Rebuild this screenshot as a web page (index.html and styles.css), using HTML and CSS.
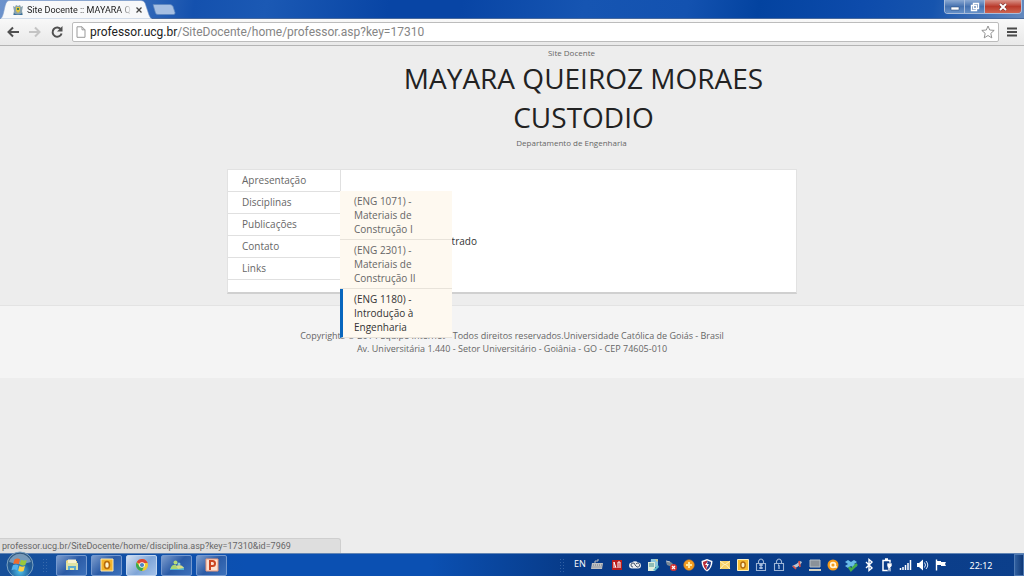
FILE: index.html
```html
<!DOCTYPE html>
<html lang="pt-BR">
<head>
<meta charset="utf-8">
<title>Site Docente :: MAYARA QUEIROZ MORAES CUSTODIO</title>
<link rel="stylesheet" href="styles.css">
</head>
<body>
<div class="tabstrip">
  <div class="tab">
    <svg class="tab-shape" viewBox="0 0 152 19" preserveAspectRatio="none"><path d="M0 19C4 18 4 5 7 1.500Q8 .5 10 .5H141Q144 .5 145 3L149 15Q150 18 152 19Z" fill="#f7f8fa" stroke="#7c9bc7" stroke-width=".6"/></svg>
    <svg class="favicon" viewBox="0 0 12 12"><path d="M1 2l2 1 1-2 2 1 2-1 1 2 2-1-1 5 1 4H1l1-4z" fill="#8aa2ae"/><path d="M4 3h4v4L6 9 4 7z" fill="#e0c546"/><path d="M2 9q4 3 8 0v2H2z" fill="#376f9f"/><path d="M5 4h2v2H5z" fill="#3c7e58"/></svg>
    <span class="tab-title">Site Docente :: MAYARA Q</span>
    <button class="tab-close" aria-label="Fechar guia"><svg viewBox="0 0 8 8"><path d="M1.500 1.500l5 5M6.500 1.500l-5 5" stroke="#444" stroke-width="1.300"/></svg></button>
  </div>
  <button class="new-tab" aria-label="Nova guia"><svg viewBox="0 0 24 11"><path d="M1 .5h17q2 0 3 2l2 6q.5 2-1.500 2H6Q4 10.500 3.500 9z" fill="#a6bfe2" stroke="#5f86bd" stroke-width=".7"/></svg></button>
  <div class="window-controls">
    <button class="win-min" aria-label="Minimizar"><svg viewBox="0 0 12 12"><path d="M2 6h8v3H2z" fill="#fff" stroke="#345583" stroke-width=".6"/></svg></button>
    <button class="win-max" aria-label="Restaurar"><svg viewBox="0 0 12 12"><path d="M4.500 2.500h5v5h-5zM2.500 4.500h5v5h-5z" fill="#5278ac" stroke="#fff" stroke-width="1.400"/></svg></button>
    <button class="win-close" aria-label="Fechar"><svg viewBox="0 0 12 12"><path d="M3 3l6 6M9 3l-6 6" stroke="#6b2a2a" stroke-width="3"/><path d="M3 3l6 6M9 3l-6 6" stroke="#fff" stroke-width="2"/></svg></button>
  </div>
</div>
<div class="toolbar">
  <button class="tool" aria-label="Voltar"><svg viewBox="0 0 14 14"><path d="M13 7H3M7 2.500L2.500 7 7 11.500" fill="none" stroke="#505050" stroke-width="2"/></svg></button>
  <button class="tool" aria-label="Avançar"><svg viewBox="0 0 14 14"><path d="M1 7h10M7 2.500L11.500 7 7 11.500" fill="none" stroke="#c4c4c4" stroke-width="2"/></svg></button>
  <button class="tool" aria-label="Recarregar"><svg viewBox="0 0 14 14"><path d="M11 4.500A4.600 4.600 0 1 0 11.600 8.500" fill="none" stroke="#505050" stroke-width="2"/><path d="M12.500 1v5.500H7z" fill="#505050"/></svg></button>
  <div class="omnibox">
    <svg class="page-icon" viewBox="0 0 10 12"><path d="M1 .8h5l3 3v7.500H1zM6 .8v3h3" fill="#fff" stroke="#999"/></svg>
    <label class="url"><span class="url-view" aria-hidden="true"><b>professor.ucg.br</b>/SiteDocente/home/professor.asp?key=17310</span><input type="text" aria-label="Endereço"></label>
    <button class="star" aria-label="Favoritos"><svg viewBox="0 0 14 14"><path d="M7 1l1.700 4 4.500.4-3.400 3 1 4.500L7 10.500l-3.800 2.400 1-4.500-3.400-3 4.500-.4z" fill="#fff" stroke="#888" stroke-width=".9"/></svg></button>
  </div>
  <button class="menu-button" aria-label="Menu"><svg viewBox="0 0 10 10"><path d="M0 1.500h10M0 5h10M0 8.500h10" stroke="#4a4a4a" stroke-width="2"/></svg></button>
</div>
<main class="page">
  <header class="masthead wrap">
    <div class="masthead-text">
      <p>Site Docente</p>
      <h1>MAYARA QUEIROZ MORAES CUSTODIO</h1>
      <p>Departamento de Engenharia</p>
    </div>
  </header>
  <div class="panel wrap">
    <nav class="side">
      <ul class="menu">
        <li><a href="#">Apresentação</a></li>
        <li><a href="#">Disciplinas</a>
          <ul class="submenu">
            <li><a href="#">(ENG 1071) - Materiais de Construção I</a></li>
            <li><a href="#">(ENG 2301) - Materiais de Construção II</a></li>
            <li class="active"><a href="#">(ENG 1180) - Introdução à Engenharia</a></li>
          </ul>
        </li>
        <li><a href="#">Publicações</a></li>
        <li><a href="#">Contato</a></li>
        <li><a href="#">Links</a></li>
      </ul>
    </nav>
    <section class="content"><p>Conteúdo não cadastrado</p></section>
  </div>
  <footer class="footer">
    <p>Copyrights © 2014 Equipe Internet - Todos direitos reservados.Universidade Católica de Goiás - Brasil</p>
    <p>Av. Universitária 1.440 - Setor Universitário - Goiânia - GO - CEP 74605-010</p>
  </footer>
  <div class="status">professor.ucg.br/SiteDocente/home/disciplina.asp?key=17310&amp;id=7969</div>
</main>
<div class="taskbar">
  <button class="start" aria-label="Iniciar"><svg viewBox="0 0 28 28"><defs><radialGradient id="orb" cx=".5" cy=".75" r=".7"><stop offset="0" stop-color="#4fc0e8"/><stop offset=".55" stop-color="#1e5d9c"/><stop offset="1" stop-color="#31587f"/></radialGradient></defs><circle cx="14" cy="14" r="13" fill="url(#orb)" stroke="#7ba3c4"/><path d="M3 11a11.500 11.500 0 0 1 22 0q-11 4-22 0z" fill="#b4cde0" opacity=".55"/><path d="M8.500 8.500q3-2 5.500-.3l-1.300 5q-2.700-1.500-5.500 0z" fill="#ee6a2c"/><path d="M15 8.700q2.500 1.400 5.800.2l-1.500 5q-3 1.200-5.500-.3z" fill="#9ac83c"/><path d="M6.900 14.300q2.800-1.500 5.500 0l-1.300 5q-2.700-1.600-5.600 0z" fill="#55b2ee"/><path d="M13.500 14.800q2.600 1.500 5.500.3l-1.400 5q-3 1.200-5.400-.4z" fill="#fdd045"/></svg></button>
  <span class="grip"></span>
  <div class="apps">
    <button class="app" aria-label="Explorador"><svg viewBox="0 0 14 14"><path d="M1 3l1-1h4l1 1h5v9H1z" fill="#ecd987"/><path d="M3 1.500h8v4H3z" fill="#f8f3d3"/><path d="M1 5h12v7H1z" fill="#dfe3a5"/><path d="M3 12V8h8v4H9v-2H5v2z" fill="#5cacd2"/></svg></button>
    <button class="app" aria-label="Outlook"><svg viewBox="0 0 14 14"><path d="M1 1h12v12H1z" fill="#f3b52c" stroke="#fbe9b5"/><ellipse cx="7" cy="7" rx="2.500" ry="3.500" fill="#fff3cb" stroke="#b76b0a" stroke-width="1.600"/></svg></button>
    <button class="app current" aria-label="Chrome"><svg viewBox="0 0 14 14"><circle cx="7" cy="7" r="6" fill="#f0ca32"/><path d="M7 7L1.600 4.300A6 6 0 0 1 12.700 5H7z" fill="#db4637"/><path d="M1.700 4.200A6 6 0 0 0 7 13l2-4.500-4.500 0z" fill="#36a852"/><circle cx="7" cy="7" r="2.800" fill="#fff"/><circle cx="7" cy="7" r="2.100" fill="#4b83c5"/></svg></button>
    <button class="app" aria-label="Mensageiro"><svg viewBox="0 0 14 14"><path d="M0 10q6-3 14-1v3H0z" fill="#4fb0d0"/><path d="M1 9q2-3 5-2l2 4H1z" fill="#a9d673"/><path d="M6 8q5-3 8 2l-6 1z" fill="#d9dd85"/><circle cx="5.500" cy="4.500" r="2" fill="#b5dc78"/><circle cx="9" cy="6" r="1.500" fill="#8bcbd6"/></svg></button>
    <button class="app" aria-label="PowerPoint"><svg viewBox="0 0 14 14"><path d="M1 1h12v12H1z" fill="#fbe0d2" stroke="#e99575"/><path d="M5 12V3h2.500a2.500 2.500 0 0 1 0 5H5" fill="none" stroke="#cb4421" stroke-width="2"/></svg></button>
  </div>
  <div class="tray">
    <span class="grip"></span>
    <span class="lang">EN</span>
    <svg class="keyboard" viewBox="0 0 14 14"><path d="M5 5V3h3V1" fill="none" stroke="#bbb"/><path d="M2 5h11l-1 6H1z" fill="#bfc1c2"/><path d="M3 7h9M2.500 9h9" stroke="#6f7985" stroke-dasharray="1 1"/></svg>
    <div class="tray-icons">
      <svg viewBox="0 0 14 14"><path d="M2 2h10v10H2z" fill="#b91c1c"/><path d="M4 10V4l2 6M8 10V4l2 0v6" fill="none" stroke="#fff"/></svg>
      <svg viewBox="0 0 14 14"><path d="M4 10.500a3 3 0 0 1 0-6 4 4 0 0 1 6 0 3 3 0 0 1 0 6z" fill="#e8ebef"/><path d="M5 9a2 2 0 1 1 2-2l2 2a2 2 0 1 0-1-3" fill="none" stroke="#44546d"/></svg>
      <svg viewBox="0 0 14 14"><path d="M5 1h7v8H4z" fill="#8cc6dc"/><path d="M2 4h7v9H2z" fill="#dfedda"/><path d="M3 6h5M3 8h5" stroke="#418d91"/><path d="M7 12l5-5 1 2-4 4z" fill="#60bccb"/><path d="M9 1l3 1-1 2z" fill="#e2ca72"/></svg>
      <svg viewBox="0 0 14 14"><path d="M2 4q4-2 7 2l-1 3-5-2z" fill="#798897"/><path d="M2 3l4 1" stroke="#c3c9cf"/><circle cx="9.500" cy="9.500" r="3.500" fill="#d43232"/><path d="M8 8l3 3M11 8l-3 3" stroke="#fff" stroke-width="1.200"/></svg>
      <svg viewBox="0 0 14 14"><circle cx="7" cy="7" r="5.300" fill="#f29c20" stroke="#c57822" stroke-width=".6"/><path d="M7 4v6M4 7h6" stroke="#ffe9a0" stroke-width="2"/></svg>
      <svg viewBox="0 0 14 14"><path d="M7 1l5.500 2q0 7-5.500 10.500Q1.500 10 1.500 3z" fill="#fff"/><path d="M7 2.500v10Q3 9 3 4z" fill="#b72b3a"/><path d="M7 2.500l4 1.500q0 5-4 8z" fill="#273f8c"/><path d="M8 3L5 7h2l-1 4 3-5H7z" fill="#fff"/></svg>
      <svg viewBox="0 0 14 14"><path d="M2 3h10v8H2z" fill="#f5d26b"/><path d="M2 3l5 4 5-4M2 11l3.500-4M12 11L8.500 7" fill="none" stroke="#fff4c8"/></svg>
      <svg viewBox="0 0 14 14"><path d="M1.500 1.500h11v11h-11z" fill="#f5bd34" stroke="#fff0bd"/><ellipse cx="7" cy="7" rx="2.200" ry="3" fill="#fff0bc" stroke="#b36b0e" stroke-width="1.400"/></svg>
      <svg viewBox="0 0 14 14"><path d="M2.500 5.500h9v7h-9zM4.500 5V3q2.500-4 5 0v2" fill="none" stroke="#9db4d5" stroke-width="1.100"/><path d="M5 7h4M7 6v5M5 10h4" stroke="#dce8fb"/></svg>
      <svg viewBox="0 0 14 14"><path d="M2.500 5.500h9v7h-9zM4.500 5V3q2.500-4 5 0v2" fill="none" stroke="#9db4d5" stroke-width="1.100"/><path d="M6 7h1v4" fill="none" stroke="#dce8fb"/></svg>
      <svg viewBox="0 0 14 14"><path d="M2 8q4-1 8-5l2 1q-2 4-7 6z" fill="#bac5d3"/><path d="M9 3l1 6M3 8l3 3" stroke="#df5043" stroke-width="1.700"/></svg>
      <svg viewBox="0 0 14 14"><path d="M2 2h10v7H2z" fill="#8b9299" stroke="#b5bec5"/><path d="M1 11h12v2H1z" fill="#d5d1bf"/></svg>
      <svg viewBox="0 0 14 14"><circle cx="7" cy="7" r="5.500" fill="#f49b19"/><circle cx="7" cy="7" r="2.400" fill="#f49b19" stroke="#fff4d7" stroke-width="1.700"/><path d="M8 9h3" stroke="#fff4d7" stroke-width="1.500"/></svg>
      <svg viewBox="0 0 14 14"><path d="M1 4l3-2 3 2 3-2 3 2-3 2 3 2-3 2-3-2-3 2-3-2 3-2z" fill="#69bbe8"/><path d="M5 9l2 3 6-6" fill="none" stroke="#44ad4a" stroke-width="2.500"/></svg>
      <svg viewBox="0 0 14 14"><path d="M4 4l6 6-3 2.500v-11L10 4l-6 6" fill="none" stroke="#fff" stroke-width="1.400"/></svg>
      <svg viewBox="0 0 14 14"><path d="M3 2.500h7v10H3zM5 1h3" fill="none" stroke="#fff" stroke-width="1.500"/><path d="M7 5h5v3l-2 2v3H8v-3L7 8z" fill="#fff" stroke="#174184" stroke-width=".6"/></svg>
      <svg viewBox="0 0 14 14"><path d="M2.500 12v-2M5 12V9M7.500 12V7M10 12V5M12.500 12V2" stroke="#fff" stroke-width="1.500"/></svg>
      <svg viewBox="0 0 14 14"><path d="M1 5h2l4-3.500v11L3 9H1z" fill="#fff"/><path d="M8.500 4.500q2 2.500 0 5M10 3q3.500 4 0 8" fill="none" stroke="#dce8fa"/></svg>
      <svg viewBox="0 0 14 14"><path d="M2.500 1.500v11" stroke="#fff" stroke-width="1.400"/><path d="M3 3h4v1h5l-1 2 1 2H7V7H3z" fill="#fff"/></svg>
    </div>
    <span class="clock">22:12</span>
    <button class="show-desktop" aria-label="Mostrar área de trabalho"></button>
  </div>
</div>
</body>
</html>
```
FILE: styles.css
```css
* { box-sizing: border-box; }
body {
  margin: 0;
  min-height: 100vh;
  display: flex;
  flex-direction: column;
  background: #ededed;
  color: #666;
  font-family: "Open Sans", "Noto Sans", sans-serif;
  font-size: 10px;
}
p, h1, ul { margin: 0; padding: 0; }
ul { list-style: none; }
a { color: inherit; text-decoration: none; }
button { border: 0; padding: 0; background: none; display: flex; align-items: center; justify-content: center; }
svg { display: block; flex: none; }

.tabstrip {
  height: 19px;
  display: flex;
  background: linear-gradient(100deg, #6c92cc 0, #3f72bd 12%, #1451ae 19%, #1b59b4 26%, #0845a5 38%, #0845a5 45%, #1655b2 57%, #1352b0 67%, #0343a0 74%, #0d4bab 84%, #1654ae 91%, #6489be 100%);
  border-bottom: 1px solid #47699d;
}
.tab { position: relative; width: 152px; height: 19px; display: flex; align-items: center; padding: 0 9px 0 12px; gap: 3px; }
.tab-shape { position: absolute; inset: 0; width: 100%; height: 100%; }
.favicon { position: relative; width: 12px; height: 12px; }
.tab-title {
  position: relative;
  flex: 1;
  overflow: hidden;
  white-space: nowrap;
  font-family: Roboto, "Open Sans", sans-serif;
  font-size: 9px;
  color: #222;
  mask-image: linear-gradient(90deg, #000 88%, transparent);
}
.tab-close { position: relative; }
.tab-close svg { width: 8px; height: 8px; }
.new-tab { height: 19px; }
.new-tab svg { width: 24px; height: 11px; }
.window-controls { margin: 0 2px 0 auto; display: flex; height: 14px; border: 1px solid #a9bddb; border-top: 0; border-radius: 0 0 4px 4px; overflow: hidden; }
.window-controls svg { width: 12px; height: 12px; }
.win-min, .win-max { width: 20px; background: linear-gradient(#8caad3, #4571af 50%, #6690c7); border-right: 1px solid #a9bddb; }
.win-close { width: 36px; background: linear-gradient(#d9948a, #b93a2b 50%, #ce6551); }

.toolbar {
  height: 27px;
  display: flex;
  align-items: center;
  padding: 0 7px 0 6px;
  gap: 8px;
  background: linear-gradient(#f8f8f8, #e9e9e9);
  border-bottom: 1px solid #b4b4b4;
}
.tool svg { width: 14px; height: 14px; }
.omnibox { flex: 1; height: 20px; display: flex; align-items: center; gap: 4px; padding: 0 3px; background: #fff; border: 1px solid #bcbcbc; border-radius: 2px; }
.page-icon { width: 10px; height: 12px; }
.url { flex: 1; position: relative; font-family: Roboto, "Open Sans", sans-serif; font-size: 12px; line-height: 16px; color: #858585; }
.url b { font-weight: 400; color: #222; }
.url input { position: absolute; inset: 0; width: 100%; border: 0; padding: 0; background: transparent; font: inherit; }
.star svg { width: 14px; height: 14px; }
.menu-button svg { width: 10px; height: 10px; }

.page { position: relative; flex: 1; }
.wrap { width: 90%; max-width: 570px; margin: 0 auto; }
.masthead { padding: 1px 0 20px; }
.masthead-text { margin-left: 119px; text-align: center; font-size: 8px; line-height: 12px; }
.masthead-text h1 { margin-left: 24px; font-size: 28px; line-height: 39px; font-weight: 400; color: #222; }
.panel { display: flex; min-height: 125px; background: #fff; border: 1px solid #e2e2e2; border-bottom: 2px solid #d0d0d0; }
.side { width: 112px; }
.menu > li { position: relative; border-bottom: 1px solid #e0e0e0; }
.menu > li > a { display: block; padding: 0 14px; line-height: 21px; }
.menu > li:first-child { border-right: 1px solid #e0e0e0; width: 113px; }
.submenu { position: absolute; z-index: 2; top: -1px; left: 100%; width: 112px; background: #fef9f0; }
.submenu li { padding: 3px 24px 3px 14px; line-height: 14px; border-bottom: 1px solid #e8e3da; }
.submenu .active { padding-left: 11px; border-left: 3px solid #0a67bd; color: #333; }
.content { flex: 1; padding: 64px 16px 0; color: #333; line-height: 14px; }
.footer { margin-top: 11px; padding: 23px 0; background: #f4f4f4; border-top: 1px solid #e3e3e3; text-align: center; font-size: 9px; line-height: 13px; }
.status {
  position: absolute;
  left: 0;
  bottom: 0;
  width: 341px;
  padding-left: 2px;
  background: #dedede;
  border: 1px solid #cfcfcf;
  border-width: 1px 1px 0 0;
  border-radius: 0 3px 0 0;
  font-family: Roboto, "Open Sans", sans-serif;
  font-size: 9px;
  line-height: 14px;
}

.taskbar {
  position: relative;
  height: 23px;
  display: flex;
  align-items: center;
  padding-left: 42px;
  background: linear-gradient(90deg, #174f99, #0b50b2 24%, #0b50b2 42%, #073a87 56%, #0c3f8b);
  border-top: 1px solid #6285b4;
  color: #fff;
}
.start { position: absolute; left: 6px; bottom: -3px; z-index: 3; }
.start svg { width: 28px; height: 28px; }
.grip { width: 7px; height: 15px; background: radial-gradient(circle, #5b83ba 0 1px, transparent 1px) 0 0 / 3px 3px; opacity: .5; }
.apps { display: flex; gap: 4px; padding-left: 7px; }
.app { width: 31px; height: 21px; border: 1px solid #7599cf; border-radius: 2px; background: linear-gradient(135deg, #7d9dcd, #2b5ba6 50%, #3c71bb); }
.app.current { background: linear-gradient(135deg, #d5e1f2, #7fa5d7 55%, #a4c2ea); border-color: #c1d5ef; }
.app svg { width: 14px; height: 14px; }
.tray { margin-left: auto; height: 100%; display: flex; align-items: center; }
.lang { width: 24px; padding: 0 0 3px 8px; font-size: 9px; line-height: 18px; }
.keyboard { width: 14px; height: 14px; margin-right: 6px; }
.tray-icons { display: flex; gap: 4px; }
.tray-icons svg { width: 14px; height: 14px; }
.clock { width: 66px; text-align: center; font-family: "Noto Sans", sans-serif; font-size: 9px; }
.show-desktop { width: 10px; height: 100%; border: 1px solid #4e79b3; background: linear-gradient(90deg, #305f9f, #0e3776); }
```
